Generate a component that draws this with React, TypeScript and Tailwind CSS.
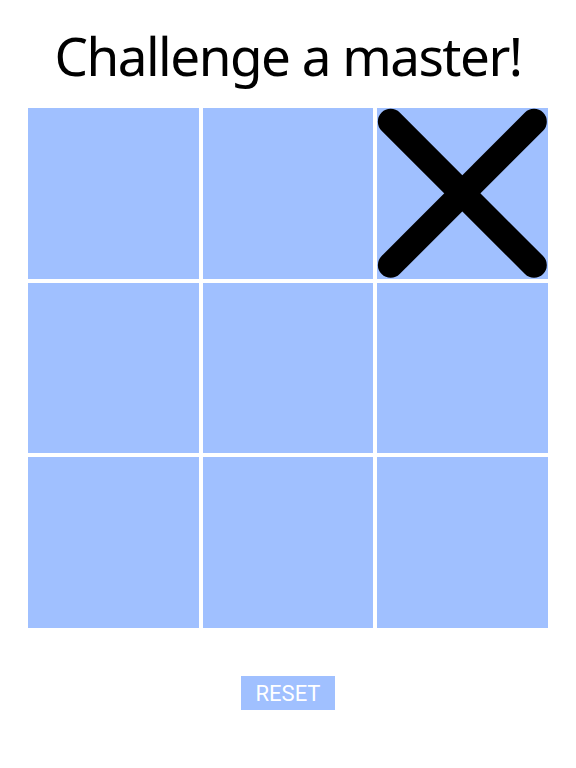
import React, { useState } from 'react';

type Mark = 'X' | 'O' | null;

function Cross() {
    return (
        <svg viewBox="0 0 100 100" className="w-full h-full">
            <g stroke="#000" strokeWidth="15" strokeLinecap="round">
                <line x1="8" y1="8" x2="92" y2="92" />
                <line x1="92" y1="8" x2="8" y2="92" />
            </g>
        </svg>
    );
}

export default function App() {
    const [board, setBoard] = useState<Mark[]>([null, null, 'X', null, null, null, null, null, null]);

    return (
        <div className="w-[576px] h-[768px] bg-white flex flex-col items-center" style={{ fontFamily: '"Noto Sans", sans-serif' }}>
            {/* Title */}
            <h1 className="mt-[23px] h-[66px] text-[53px] leading-[66px] text-black tracking-[-1.5px] whitespace-nowrap">
                Challenge a master!
            </h1>

            {/* Board */}
            <div className="mt-[19px] w-[520px] h-[520px] grid grid-cols-3 grid-rows-3 gap-1">
                {board.map((cell, i) => (
                    <button
                        key={i}
                        onClick={() => setBoard(prev => prev.map((c, j) => (j === i && !c ? 'X' : c)))}
                        className="bg-[#a0c0ff] flex items-center justify-center"
                    >
                        {cell === 'X' && <Cross />}
                    </button>
                ))}
            </div>

            <button
                onClick={() => setBoard(Array(9).fill(null))}
                className="mt-[48px] w-[94px] h-[34px] bg-[#a0c0ff] text-white text-[22px] font-normal flex items-center justify-center"
                style={{ fontFamily: 'Roboto, sans-serif' }}
            >
                RESET
            </button>
        </div>
    );
}
